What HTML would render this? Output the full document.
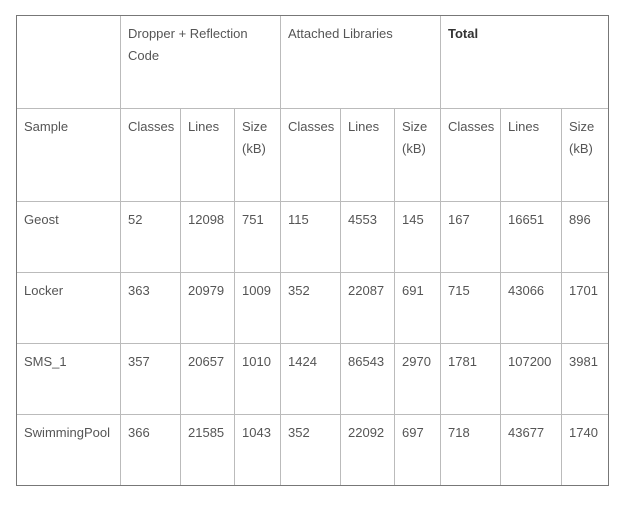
<!DOCTYPE html><html><head><style>
body{margin:0;width:633px;height:506px;background:#fff;position:relative;font-family:"Liberation Sans",sans-serif;font-size:13px;color:#555;overflow:hidden}
.v{position:absolute;width:1px;background:#bbb}
.h{position:absolute;height:1px;background:#bbb}
.t{position:absolute;line-height:22px;white-space:nowrap}
#o{position:absolute;left:16px;top:15px;width:591px;height:469px;border:1px solid #777}
</style></head><body>
<div id="o"></div>
<div class="h" style="left:17px;top:108px;width:591px"></div>
<div class="h" style="left:17px;top:201px;width:591px"></div>
<div class="h" style="left:17px;top:272px;width:591px"></div>
<div class="h" style="left:17px;top:343px;width:591px"></div>
<div class="h" style="left:17px;top:414px;width:591px"></div>
<div class="v" style="left:120px;top:16px;height:469px"></div>
<div class="v" style="left:280px;top:16px;height:469px"></div>
<div class="v" style="left:440px;top:16px;height:469px"></div>
<div class="v" style="left:180px;top:108px;height:377px"></div>
<div class="v" style="left:234px;top:108px;height:377px"></div>
<div class="v" style="left:340px;top:108px;height:377px"></div>
<div class="v" style="left:394px;top:108px;height:377px"></div>
<div class="v" style="left:500px;top:108px;height:377px"></div>
<div class="v" style="left:561px;top:108px;height:377px"></div>
<div class="t" style="left:128px;top:23px">Dropper + Reflection<br>Code</div>
<div class="t" style="left:288px;top:23px">Attached Libraries</div>
<div class="t" style="left:448px;top:23px;font-weight:bold;color:#333">Total</div>
<div class="t" style="left:24px;top:116px">Sample</div>
<div class="t" style="left:128px;top:116px">Classes</div>
<div class="t" style="left:188px;top:116px">Lines</div>
<div class="t" style="left:242px;top:116px">Size<br>(kB)</div>
<div class="t" style="left:288px;top:116px">Classes</div>
<div class="t" style="left:348px;top:116px">Lines</div>
<div class="t" style="left:402px;top:116px">Size<br>(kB)</div>
<div class="t" style="left:448px;top:116px">Classes</div>
<div class="t" style="left:508px;top:116px">Lines</div>
<div class="t" style="left:569px;top:116px">Size<br>(kB)</div>

<div class="t" style="left:24px;top:209px">Geost</div>
<div class="t" style="left:128px;top:209px">52</div>
<div class="t" style="left:188px;top:209px">12098</div>
<div class="t" style="left:242px;top:209px">751</div>
<div class="t" style="left:288px;top:209px">115</div>
<div class="t" style="left:348px;top:209px">4553</div>
<div class="t" style="left:402px;top:209px">145</div>
<div class="t" style="left:448px;top:209px">167</div>
<div class="t" style="left:508px;top:209px">16651</div>
<div class="t" style="left:569px;top:209px">896</div>

<div class="t" style="left:24px;top:280px">Locker</div>
<div class="t" style="left:128px;top:280px">363</div>
<div class="t" style="left:188px;top:280px">20979</div>
<div class="t" style="left:242px;top:280px">1009</div>
<div class="t" style="left:288px;top:280px">352</div>
<div class="t" style="left:348px;top:280px">22087</div>
<div class="t" style="left:402px;top:280px">691</div>
<div class="t" style="left:448px;top:280px">715</div>
<div class="t" style="left:508px;top:280px">43066</div>
<div class="t" style="left:569px;top:280px">1701</div>

<div class="t" style="left:24px;top:351px">SMS_1</div>
<div class="t" style="left:128px;top:351px">357</div>
<div class="t" style="left:188px;top:351px">20657</div>
<div class="t" style="left:242px;top:351px">1010</div>
<div class="t" style="left:288px;top:351px">1424</div>
<div class="t" style="left:348px;top:351px">86543</div>
<div class="t" style="left:402px;top:351px">2970</div>
<div class="t" style="left:448px;top:351px">1781</div>
<div class="t" style="left:508px;top:351px">107200</div>
<div class="t" style="left:569px;top:351px">3981</div>

<div class="t" style="left:24px;top:422px">SwimmingPool</div>
<div class="t" style="left:128px;top:422px">366</div>
<div class="t" style="left:188px;top:422px">21585</div>
<div class="t" style="left:242px;top:422px">1043</div>
<div class="t" style="left:288px;top:422px">352</div>
<div class="t" style="left:348px;top:422px">22092</div>
<div class="t" style="left:402px;top:422px">697</div>
<div class="t" style="left:448px;top:422px">718</div>
<div class="t" style="left:508px;top:422px">43677</div>
<div class="t" style="left:569px;top:422px">1740</div>
</body></html>
